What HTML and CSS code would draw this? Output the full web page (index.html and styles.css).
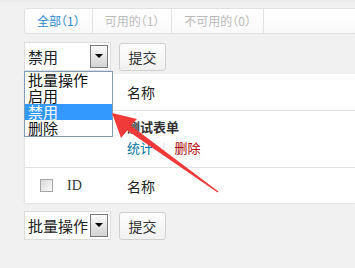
FILE: index.html
```html
<!DOCTYPE html>
<html lang="zh-CN">
<head>
    <meta charset="UTF-8">
    <title>表单列表</title>
    <link rel="stylesheet" href="styles.css">
</head>
<body>
    <div class="page">
        <ul class="tabs">
            <li class="current">全部（1）</li>
            <li>可用的（1）</li>
            <li>不可用的（0）</li>
        </ul>

        <div class="actions">
            <div class="select open">
                <span class="select-text">禁用</span>
                <span class="select-arrow"></span>
                <ul class="select-list">
                    <li>批量操作</li>
                    <li>启用</li>
                    <li class="active">禁用</li>
                    <li>删除</li>
                </ul>
            </div>
            <button class="btn">提交</button>
        </div>

        <div class="table">
            <!-- 这一行左边被下拉框盖住 -->
            <div class="row head covered">
                <span class="col-check"><span class="checkbox"></span></span>
                <span class="col-id">ID</span>
                <span class="col-name">名称</span>
            </div>
            <div class="row item covered">
                <span class="col-check"><span class="checkbox"></span></span>
                <span class="col-id">1</span>
                <div class="col-name">
                    <strong>测试表单</strong>
                    <div class="links">
                        <a class="link-view">统计</a>
                        <span class="sep">|</span>
                        <a class="link-delete">删除</a>
                    </div>
                </div>
            </div>
            <div class="row head">
                <span class="col-check"><span class="checkbox"></span></span>
                <span class="col-id">ID</span>
                <span class="col-name">名称</span>
            </div>
        </div>

        <div class="actions">
            <div class="select">
                <span class="select-text">批量操作</span>
                <span class="select-arrow"></span>
            </div>
            <button class="btn">提交</button>
        </div>

        <!-- 红色箭头标注 -->
        <svg class="arrow" width="355" height="268" viewBox="0 0 355 268">
            <polygon fill="#f03a3a" points="112,113 137,119 130.8,125.6 218.4,191.6 217.6,192.4 127.2,130.4 121,138"/>
        </svg>
    </div>
</body>
</html>
```

FILE: styles.css
```css
body {
    margin: 0;
    background-color: #f1f1f1;
    font-family: "Noto Sans CJK SC", "DejaVu Sans", sans-serif;
    color: #333;
    overflow: hidden;
}
.page {
    position: relative;
    padding: 6px 0 0 24px;
    height: 260px;
    border-top: 2px solid #e9e9e9;
    box-sizing: border-box;
}
.tabs {
    display: flex;
    margin: 0 -6px 0 0;
    padding: 0;
    list-style: none;
    height: 24px;
    background: linear-gradient(#ffffff, #f9f9f9);
    border: 1px solid #e1e1e1;
    border-radius: 3px;
}
.tabs li {
    padding: 0 12px;
    border-right: 1px solid #e1e1e1;
    font-size: 12px;
    line-height: 24px;
    color: #bbb;
    font-feature-settings: "halt";
}
.tabs li.current {
    color: #2a88d0;
}

.actions {
    display: flex;
    gap: 8px;
    margin-top: 8px;
}
.select {
    position: relative;
    width: 87px;
    height: 29px;
    box-sizing: border-box;
    border: 1px solid #dcdcdc;
    background-color: #fff;
    display: flex;
    align-items: center;
}
.select-text {
    flex: 1;
    padding-left: 3px;
    font-size: 15px;
    color: #222;
    white-space: nowrap;
    overflow: hidden;
}
.select-arrow {
    position: relative;
    flex-shrink: 0;
    width: 16px;
    height: 21px;
    margin-right: 2px;
    border: 1px solid #7a7a7a;
    background: linear-gradient(#fbfbfb, #d2d2d2);
}
.select-arrow::after {
    content: "";
    position: absolute;
    left: 4px;
    top: 8px;
    border-left: 4px solid transparent;
    border-right: 4px solid transparent;
    border-top: 4px solid #000;
}
.select-list {
    position: absolute;
    z-index: 2;
    left: -1px;
    top: 28px;
    width: 87px;
    margin: 0;
    padding: 0;
    list-style: none;
    background-color: #fff;
    border: 1px solid #7f9db9;
}
.select-list li {
    height: 16px;
    line-height: 16px;
    padding-left: 3px;
    font-size: 15px;
    color: #111;
}
.select-list li.active {
    background-color: #3399ff;
    color: #fff;
}
.btn {
    width: 47px;
    height: 28px;
    margin-top: 1px;
    border: 1px solid #d0d0d0;
    border-radius: 3px;
    background: linear-gradient(#fdfdfd, #f1f1f1);
    font-family: inherit;
    font-size: 14px;
    color: #333;
    padding: 0;
}

.table {
    margin-top: 3px;
    background-color: #fff;
    border-left: 1px solid #e5e5e5;
    box-shadow: 0 1px 2px rgba(0, 0, 0, 0.06);
}
.row {
    display: flex;
    align-items: center;
    height: 36px;
    border-top: 1px solid #e1e1e1;
    box-sizing: border-box;
    font-size: 14px;
}
.row:first-child {
    border-top: none;
}
.row.item {
    height: 57px;
    align-items: flex-start;
    padding-top: 5px;
}
.col-check {
    width: 42px;
    display: flex;
    justify-content: center;
}
.checkbox {
    display: block;
    width: 11px;
    height: 11px;
    border: 1px solid #a5a5a5;
    background: linear-gradient(135deg, #d8d8d8, #fbfbfb);
}
.col-id {
    width: 60px;
    font-family: "Liberation Serif", serif;
    font-size: 14px;
}
.col-name {
    color: #222;
}
.covered .col-check,
.covered .col-id {
    visibility: hidden;
}
.row.item strong {
    font-size: 13px;
    color: #333;
}
.links {
    margin-top: 2px;
    font-size: 13px;
}
.link-view {
    color: #0074a2;
}
.sep {
    color: #ddd;
    margin: 0 6px;
}
.link-delete {
    color: #a00;
}

.arrow {
    position: absolute;
    left: 0;
    top: -2px;
    z-index: 3;
    pointer-events: none;
}
```
